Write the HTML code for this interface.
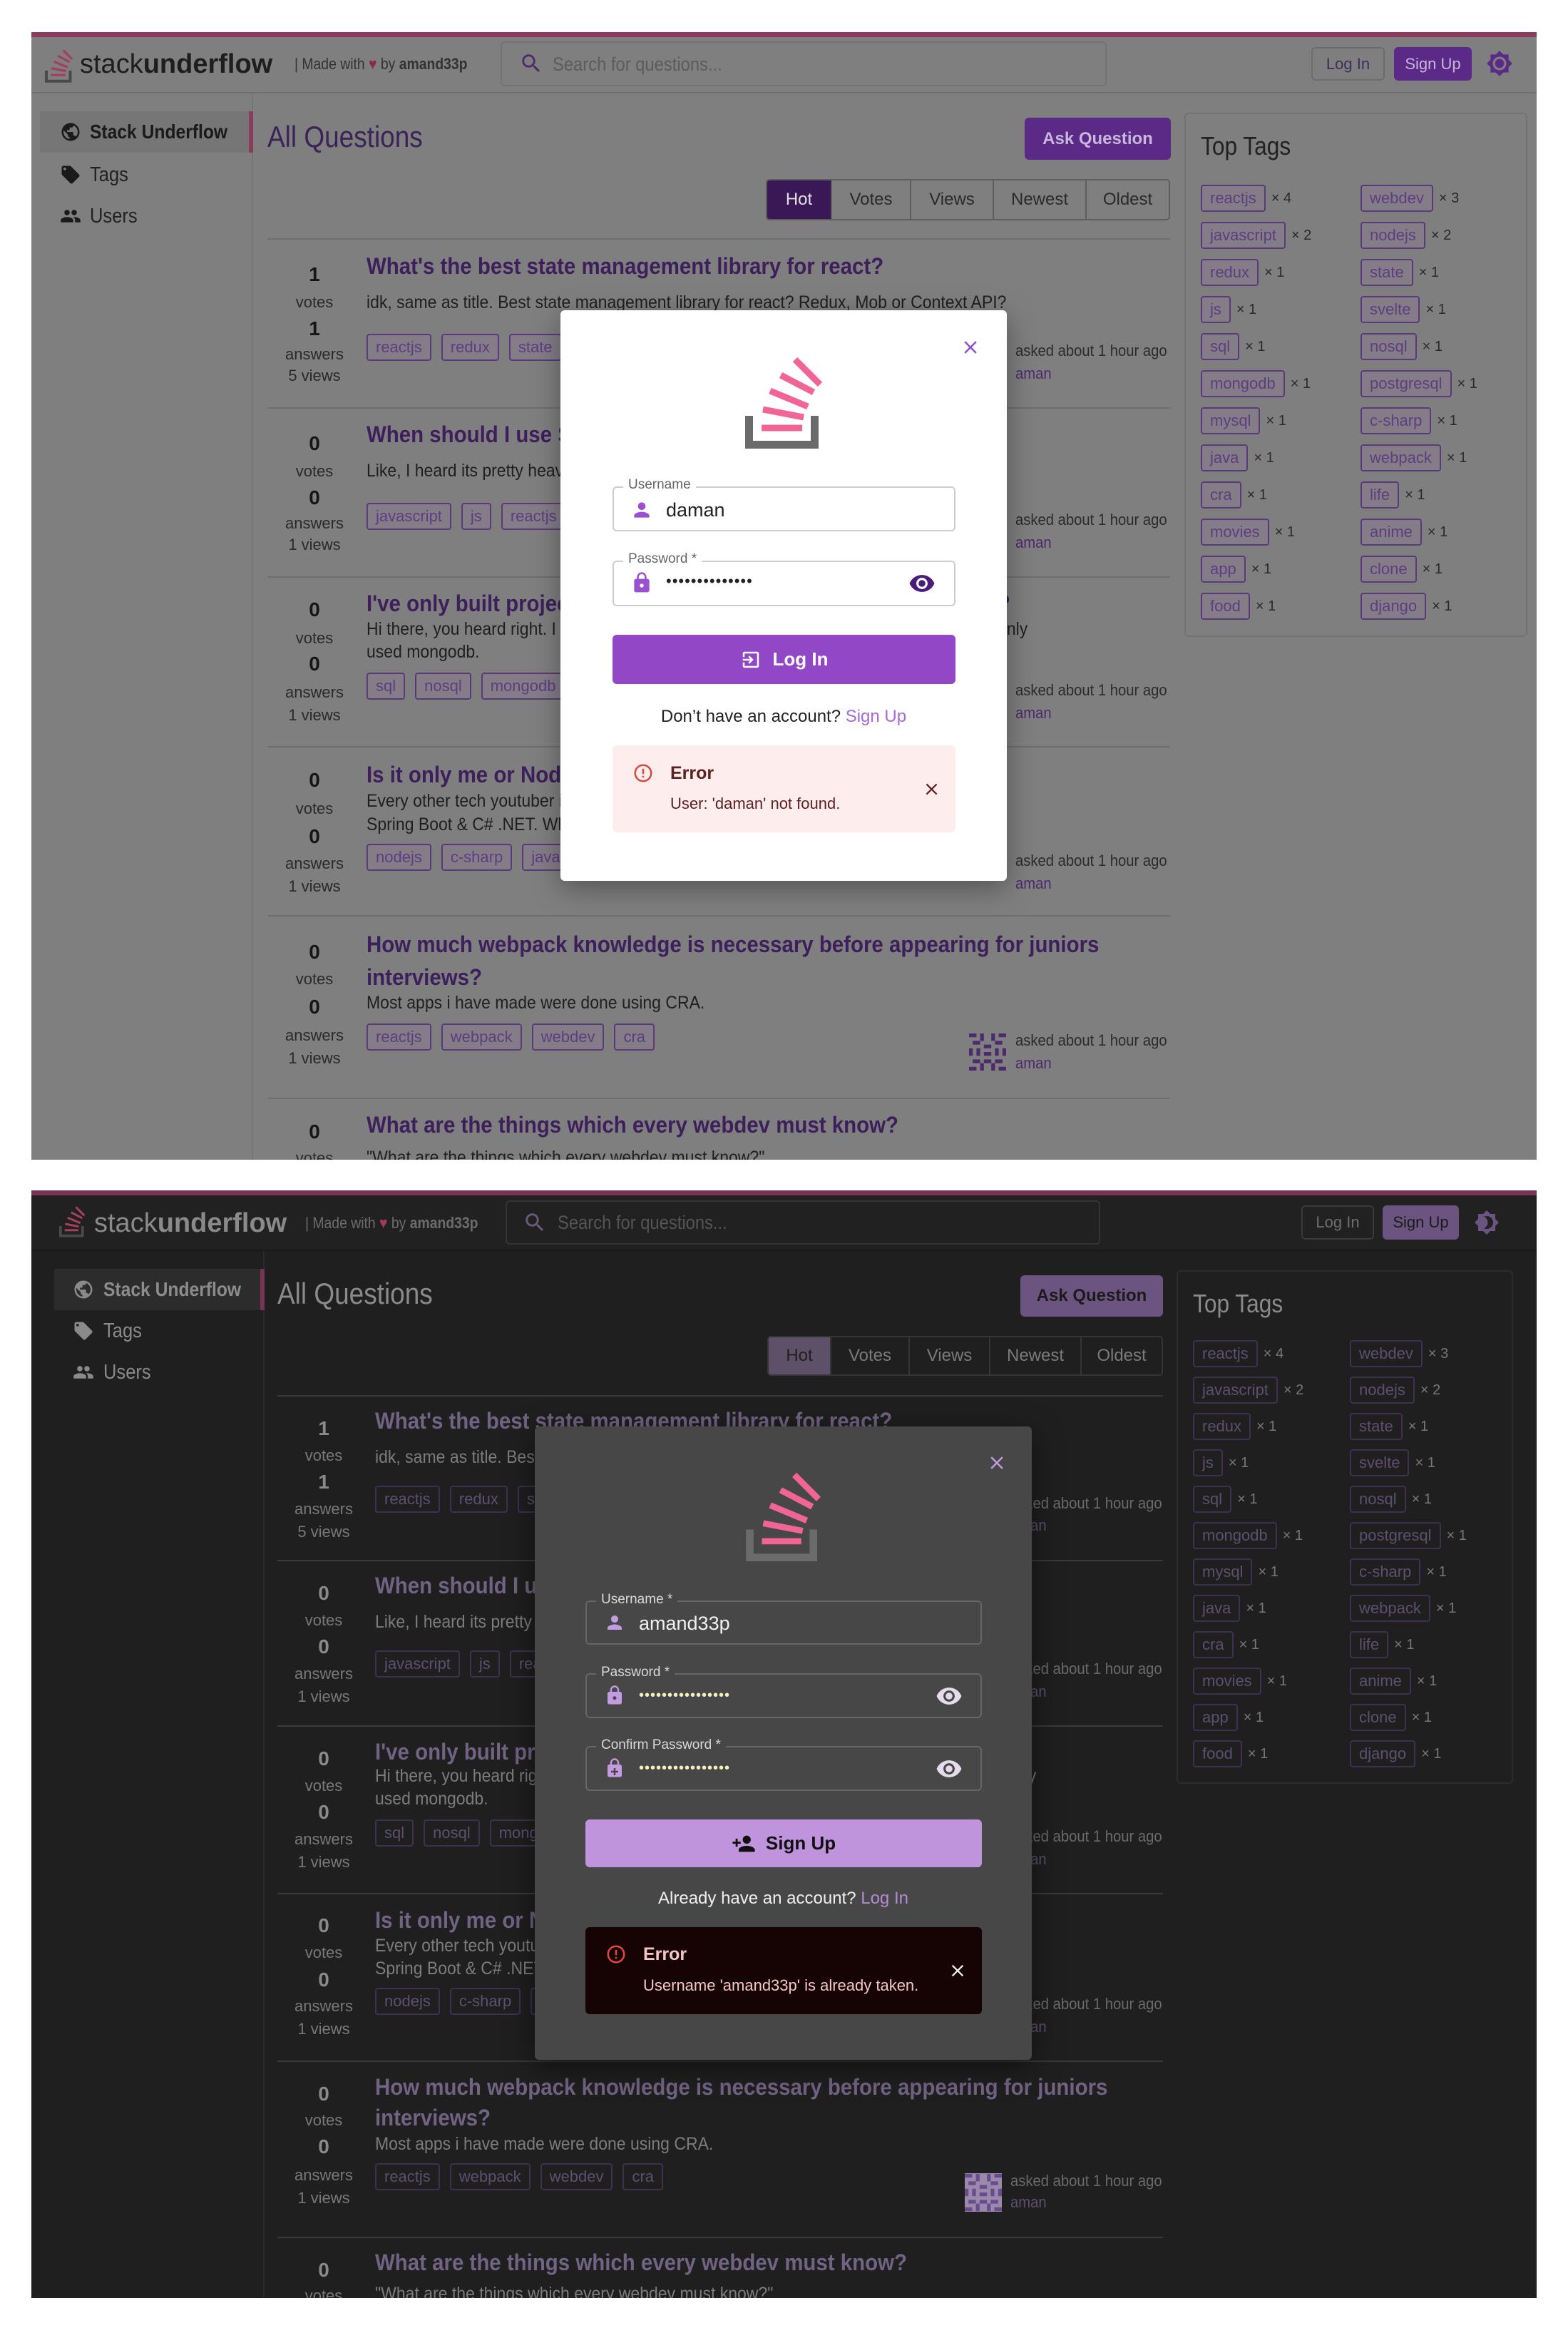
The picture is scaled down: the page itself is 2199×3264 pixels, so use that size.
<!DOCTYPE html>
<html><head><meta charset="utf-8">
<style>
*{box-sizing:border-box;margin:0;padding:0}
body{width:2199px;height:3264px;position:relative;background:#fff;overflow:hidden;font-family:"Liberation Sans Narrow","Liberation Sans",sans-serif}
.a{position:absolute;white-space:nowrap}
.fr{position:absolute;left:0;top:0;width:2199px;height:3264px}
.q{font-size:32px;line-height:40px;font-weight:bold;transform:scaleX(.92);transform-origin:0 50%}
.d{font-size:25px;line-height:32px;transform:scaleX(.92);transform-origin:0 50%}
.cz{transform:scaleX(.88);transform-origin:0 50%}
.n{font-size:28px;line-height:32px;width:100px;text-align:center;font-weight:bold}
.l{font-size:22px;line-height:28px;width:140px;text-align:center}
.tg{display:flex;gap:14px;height:38px}
.tag{border:2px solid;border-radius:4px;padding:0 11px;height:38px;line-height:34px;font-size:22px}
.as{font-size:22px;line-height:28px;transform:scaleX(.92);transform-origin:0 50%}
.ttr{display:flex;align-items:center;gap:8px;font-size:20px}
.btn{display:flex;align-items:center;justify-content:center;border-radius:6px}
.ms{font-family:"Liberation Sans",sans-serif}
svg{display:block}
.F1 .q{color:#3d1f5c}.F1 .d{color:#1f1f1f}.F1 .n{color:#161616}.F1 .l{color:#2a2a2a}
.F1 .tag{border-color:#5b3a7b;color:#5e3d80;background:#847d88}.F1 .as{color:#2b2b2b}.F1 .am{color:#4d2a6e}
.F1 .ttr{color:#2a2a2a}
.F2 .q{color:#706383}.F2 .d{color:#7c7c7c}.F2 .n{color:#8a8a8a}.F2 .l{color:#787878}
.F2 .tag{border-color:#3e3150;color:#5d4f6f}.F2 .as{color:#6a6a6a}.F2 .am{color:#5d4f6f}
.F2 .ttr{color:#777}
</style></head><body>
<svg width="0" height="0" style="position:absolute">
<defs>
<symbol id="lg" viewBox="0 0 110 132"><path d="M5.5 84V124.5H97.5V84" fill="none" stroke="#6b6b6b" stroke-width="11"/><g stroke="#f06595" stroke-width="9"><line x1="23" y1="101" x2="80" y2="101"/><line x1="25" y1="75" x2="82" y2="86"/><line x1="35" y1="49" x2="88" y2="71"/><line x1="50" y1="27" x2="96" y2="51"/><line x1="70" y1="5" x2="105" y2="40"/></g></symbol>
<symbol id="lgd" viewBox="0 0 110 132"><path d="M5.5 84V124.5H97.5V84" fill="none" stroke="#4a4a4a" stroke-width="11"/><g stroke="#a3405f" stroke-width="9"><line x1="23" y1="101" x2="80" y2="101"/><line x1="25" y1="75" x2="82" y2="86"/><line x1="35" y1="49" x2="88" y2="71"/><line x1="50" y1="27" x2="96" y2="51"/><line x1="70" y1="5" x2="105" y2="40"/></g></symbol>
<symbol id="per" viewBox="0 0 24 24"><path d="M12 12c2.21 0 4-1.79 4-4s-1.79-4-4-4-4 1.79-4 4 1.79 4 4 4zm0 2c-2.67 0-8 1.34-8 4v2h16v-2c0-2.66-5.33-4-8-4z"/></symbol>
<symbol id="lock" viewBox="0 0 24 24"><path d="M18 8h-1V6c0-2.76-2.24-5-5-5S7 3.24 7 6v2H6c-1.1 0-2 .9-2 2v10c0 1.1.9 2 2 2h12c1.1 0 2-.9 2-2V10c0-1.1-.9-2-2-2zm-6 9c-1.1 0-2-.9-2-2s.9-2 2-2 2 .9 2 2-.9 2-2 2zm3.1-9H8.9V6c0-1.71 1.39-3.1 3.1-3.1 1.71 0 3.1 1.39 3.1 3.1v2z"/></symbol>
<symbol id="lockp" viewBox="0 0 24 24"><path d="M18 8h-1V6c0-2.76-2.24-5-5-5S7 3.24 7 6v2H6c-1.1 0-2 .9-2 2v10c0 1.1.9 2 2 2h12c1.1 0 2-.9 2-2V10c0-1.1-.9-2-2-2zm-5 12h-2v-3H8v-2h3v-3h2v3h3v2h-3zm2.1-12H8.9V6c0-1.71 1.39-3.1 3.1-3.1 1.710 0 3.1 1.39 3.1 3.1v2z"/></symbol>
<symbol id="eye" viewBox="0 0 24 24"><path d="M12 4.5C7 4.5 2.73 7.61 1 12c1.73 4.39 6 7.5 11 7.5s9.27-3.11 11-7.5c-1.73-4.39-6-7.5-11-7.5zM12 17c-2.76 0-5-2.24-5-5s2.24-5 5-5 5 2.24 5 5-2.24 5-5 5zm0-8c-1.66 0-3 1.34-3 3s1.34 3 3 3 3-1.34 3-3-1.34-3-3-3z"/></symbol>
<symbol id="login" viewBox="0 0 24 24"><path d="M3 5c0-1.1.9-2 2-2h14c1.1 0 2 .9 2 2v14c0 1.1-.9 2-2 2H5c-1.1 0-2-.9-2-2v-4h2v4h14V5H5v4H3V5zm7.5 2.5L9.1 8.9 11.2 11H3v2h8.2l-2.1 2.1 1.4 1.4L15 12l-4.5-4.5z"/></symbol>
<symbol id="padd" viewBox="0 0 24 24"><path d="M15 12c2.21 0 4-1.79 4-4s-1.79-4-4-4-4 1.79-4 4 1.79 4 4 4zm-9-2V7H4v3H1v2h3v3h2v-3h3v-2H6zm9 4c-2.67 0-8 1.34-8 4v2h16v-2c0-2.66-5.33-4-8-4z"/></symbol>
<symbol id="cls" viewBox="0 0 24 24"><path d="M19 6.41L17.59 5 12 10.59 6.41 5 5 6.41 10.59 12 5 17.59 6.41 19 12 13.41 17.59 19 19 17.59 13.41 12z"/></symbol>
<symbol id="err" viewBox="0 0 24 24"><path d="M11 15h2v2h-2zm0-8h2v6h-2zm.99-5C6.47 2 2 6.48 2 12s4.47 10 9.99 10C17.52 22 22 17.52 22 12S17.52 2 11.99 2zM12 20c-4.42 0-8-3.58-8-8s3.58-8 8-8 8 3.58 8 8-3.58 8-8 8z"/></symbol>
<symbol id="srch" viewBox="0 0 24 24"><path d="M15.5 14h-.79l-.28-.27C15.41 12.59 16 11.11 16 9.5 16 5.91 13.09 3 9.5 3S3 5.91 3 9.5 5.91 16 9.5 16c1.61 0 3.09-.59 4.23-1.57l.27.28v.79l5 4.99L20.49 19l-4.99-5zm-6 0C7.01 14 5 11.99 5 9.5S7.01 5 9.5 5 14 7.01 14 9.5 11.99 14 9.5 14z"/></symbol>
<symbol id="glb" viewBox="0 0 24 24"><path d="M12 2C6.48 2 2 6.48 2 12s4.48 10 10 10 10-4.48 10-10S17.52 2 12 2zm-1 17.93c-3.95-.49-7-3.85-7-7.93 0-.62.08-1.21.21-1.79L9 15v1c0 1.1.9 2 2 2v1.930zm6.9-2.54c-.26-.81-1-1.39-1.9-1.39h-1v-3c0-.55-.45-1-1-1H8v-2h2c.55 0 1-.45 1-1V7h2c1.1 0 2-.9 2-2v-.41c2.93 1.19 5 4.06 5 7.41 0 2.08-.8 3.97-2.1 5.39z"/></symbol>
<symbol id="tagi" viewBox="0 0 24 24"><path d="M21.41 11.58l-9-9C12.05 2.22 11.55 2 11 2H4c-1.1 0-2 .9-2 2v7c0 .55.22 1.05.59 1.42l9 9c.36.36.86.58 1.41.58.55 0 1.05-.22 1.41-.59l7-7c.37-.36.59-.86.59-1.41 0-.55-.23-1.06-.59-1.42zM5.5 7C4.67 7 4 6.33 4 5.5S4.67 4 5.5 4 7 4.67 7 5.5 6.33 7 5.5 7z"/></symbol>
<symbol id="ppl" viewBox="0 0 24 24"><path d="M16 11c1.66 0 2.99-1.34 2.99-3S17.66 5 16 5c-1.66 0-3 1.34-3 3s1.34 3 3 3zm-8 0c1.66 0 2.99-1.34 2.99-3S9.66 5 8 5C6.34 5 5 6.34 5 8s1.34 3 3 3zm0 2c-2.33 0-7 1.17-7 3.5V19h14v-2.5c0-2.33-4.67-3.5-7-3.5zm8 0c-.29 0-.62.02-.97.05 1.16.84 1.97 1.97 1.97 3.45V19h6v-2.5c0-2.33-4.67-3.5-7-3.5z"/></symbol>
<symbol id="sun" viewBox="0 0 24 24"><path d="M20 8.69V4h-4.69L12 .69 8.69 4H4v4.69L.69 12 4 15.31V20h4.69L12 23.31 15.31 20H20v-4.69L23.31 12 20 8.69zM12 18c-3.31 0-6-2.69-6-6s2.69-6 6-6 6 2.69 6 6-2.69 6-6 6zm0-10c-2.21 0-4 1.79-4 4s1.79 4 4 4 4-1.79 4-4-1.79-4-4-4z"/></symbol>
<symbol id="moon" viewBox="0 0 24 24"><path d="M20 8.69V4h-4.69L12 .69 8.69 4H4v4.69L.69 12 4 15.31V20h4.69L12 23.31 15.31 20H20v-4.69L23.31 12 20 8.69zM12 18c-.89 0-1.74-.2-2.5-.55C11.56 16.5 13 14.42 13 12s-1.44-4.5-3.5-5.45C10.26 6.2 11.11 6 12 6c3.31 0 6 2.69 6 6s-2.69 6-6 6z"/></symbol>
<symbol id="idn" viewBox="0 0 10 10"><path d="M0 0h2v1H0zM8 0h2v1H8zM3 0h1v2H3zM6 0h1v2H6zM1 2h2v1H1zM7 2h2v1H7zM4 3h2v1H4zM0 4h1v2H0zM9 4h1v2H9zM2 4h1v2H2zM7 4h1v2H7zM4 5h2v1H4zM1 7h2v1H1zM7 7h2v1H7zM3 8h1v2H3zM6 8h1v2H6zM0 9h2v1H0zM8 9h2v1H8zM4 7h2v1H4z"/></symbol>
</defs></svg>

<!-- ============ FRAME 1 ============ -->
<div class="fr F1" style="clip-path:inset(45px 44px 1638px 44px)">
<div class="a" style="left:44px;top:45px;width:2111px;height:1581px;background:#7f7f7f"></div>
<div class="a" style="left:44px;top:45px;width:2111px;height:7px;background:#8b3b5b"></div>
<div class="a" style="left:44px;top:129px;width:2111px;height:2px;background:#6f6f6f"></div>
<svg class="a" style="left:63px;top:67px" width="40" height="51"><use href="#lgd"/></svg>
<div class="a ms" style="left:112px;top:66px;font-size:38px;line-height:48px;color:#1e1e1e">stack<b>underflow</b></div>
<div class="a cz" style="left:413px;top:76px;font-size:22px;line-height:28px;color:#333">| Made with <span style="color:#8a2a4a">♥</span> by <b>amand33p</b></div>
<div class="a" style="left:702px;top:58px;width:850px;height:63px;border:2px solid #737373;border-radius:6px"></div>
<svg class="a" style="left:728px;top:72px;fill:#4d2a6e" width="34" height="34"><use href="#srch"/></svg>
<div class="a cz" style="left:775px;top:74px;font-size:27px;line-height:32px;color:#5c5c5c">Search for questions...</div>
<div class="a btn" style="left:1839px;top:66px;width:103px;height:47px;border:2px solid #6c6c6c;font-size:22px;color:#3e2e5a">Log In</div>
<div class="a btn" style="left:1955px;top:66px;width:109px;height:47px;background:#5a2a86;font-size:22px;color:#c9b6dc">Sign Up</div>
<svg class="a" style="left:2084px;top:70px;fill:#5a2a86" width="38" height="38"><use href="#sun"/></svg>
<div class="a" style="left:353px;top:131px;width:2px;height:1500px;background:#767676"></div>
<div class="a" style="left:56px;top:156px;width:293px;height:58px;background:#767676"></div>
<div class="a" style="left:349px;top:156px;width:6px;height:58px;background:#8b3b5b"></div>
<svg class="a" style="left:84px;top:170px;fill:#1a1a1a" width="30" height="30"><use href="#glb"/></svg>
<div class="a cz" style="left:126px;top:169px;font-size:28px;line-height:32px;font-weight:bold;color:#1a1a1a">Stack Underflow</div>
<svg class="a" style="left:84px;top:230px;fill:#1a1a1a" width="30" height="30"><use href="#tagi"/></svg>
<div class="a cz" style="left:126px;top:229px;font-size:29px;line-height:32px;color:#222">Tags</div>
<svg class="a" style="left:84px;top:288px;fill:#1a1a1a" width="30" height="30"><use href="#ppl"/></svg>
<div class="a cz" style="left:126px;top:287px;font-size:29px;line-height:32px;color:#222">Users</div>
<div class="a cz" style="left:375px;top:168px;font-size:42px;line-height:48px;color:#3a2356">All Questions</div>
<div class="a btn" style="left:1437px;top:165px;width:205px;height:59px;background:#5a2a86;font-size:24px;color:#c9b6dc;font-weight:bold">Ask Question</div>
<div class="a" style="left:1074px;top:251px;width:567px;height:58px;border:2px solid #5e5e5e;border-radius:5px;display:flex;font-size:24px;color:#2a2a2a;overflow:hidden">
<div class="btn" style="width:89px;background:#3a1858;color:#e0e0e0;border-radius:0">Hot</div>
<div class="btn" style="width:111px;border-left:2px solid #5e5e5e;border-radius:0">Votes</div>
<div class="btn" style="width:116px;border-left:2px solid #5e5e5e;border-radius:0">Views</div>
<div class="btn" style="width:130px;border-left:2px solid #5e5e5e;border-radius:0">Newest</div>
<div class="btn" style="flex:1;border-left:2px solid #5e5e5e;border-radius:0">Oldest</div>
</div>
<div class="a" style="left:375px;top:334px;width:1266px;height:2px;background:#6e6e6e"></div>
<div class="a" style="left:375px;top:571px;width:1266px;height:2px;background:#6e6e6e"></div>
<div class="a" style="left:375px;top:808px;width:1266px;height:2px;background:#6e6e6e"></div>
<div class="a" style="left:375px;top:1046px;width:1266px;height:2px;background:#6e6e6e"></div>
<div class="a" style="left:375px;top:1283px;width:1266px;height:2px;background:#6e6e6e"></div>
<div class="a" style="left:375px;top:1539px;width:1266px;height:2px;background:#6e6e6e"></div>
<div class="a n" style="left:391px;top:369px">1</div><div class="a l" style="left:371px;top:410px">votes</div>
<div class="a n" style="left:391px;top:445px">1</div><div class="a l" style="left:371px;top:483px">answers</div><div class="a l" style="left:371px;top:513px">5 views</div>
<div class="a q" style="left:514px;top:353px">What's the best state management library for react?</div>
<div class="a d" style="left:514px;top:408px">idk, same as title. Best state management library for react? Redux, Mob or Context API?</div>
<div class="a tg" style="left:514px;top:468px"><span class="tag">reactjs</span><span class="tag">redux</span><span class="tag">state</span></div>
<svg class="a" style="left:1359px;top:466px;fill:#4d2a6e" width="52" height="52"><use href="#idn"/></svg>
<div class="a as" style="left:1424px;top:478px">asked about 1 hour ago</div><div class="a as am" style="left:1424px;top:510px">aman</div>
<div class="a n" style="left:391px;top:606px">0</div><div class="a l" style="left:371px;top:647px">votes</div>
<div class="a n" style="left:391px;top:682px">0</div><div class="a l" style="left:371px;top:720px">answers</div><div class="a l" style="left:371px;top:750px">1 views</div>
<div class="a q" style="left:514px;top:589px">When should I use Svelte now that it's getting popular?</div>
<div class="a d" style="left:514px;top:644px">Like, I heard its pretty heavy on the client side...</div>
<div class="a tg" style="left:514px;top:705px"><span class="tag">javascript</span><span class="tag">js</span><span class="tag">reactjs</span></div>
<svg class="a" style="left:1359px;top:703px;fill:#4d2a6e" width="52" height="52"><use href="#idn"/></svg>
<div class="a as" style="left:1424px;top:715px">asked about 1 hour ago</div><div class="a as am" style="left:1424px;top:747px">aman</div>
<div class="a n" style="left:391px;top:839px">0</div><div class="a l" style="left:371px;top:881px">votes</div>
<div class="a n" style="left:391px;top:915px">0</div><div class="a l" style="left:371px;top:957px">answers</div><div class="a l" style="left:371px;top:989px">1 views</div>
<div class="a q" style="left:514px;top:826px">I've only built projects using NoSQL DBs. Are SQL DBs worth it?</div>
<div class="a d" style="left:514px;top:866px">Hi there, you heard right. I have only built projects with NoSQL DBs, are they worth it? Only</div>
<div class="a d" style="left:514px;top:898px">used mongodb.</div>
<div class="a tg" style="left:514px;top:943px"><span class="tag">sql</span><span class="tag">nosql</span><span class="tag">mongodb</span></div>
<svg class="a" style="left:1359px;top:942px;fill:#4d2a6e" width="52" height="52"><use href="#idn"/></svg>
<div class="a as" style="left:1424px;top:954px">asked about 1 hour ago</div><div class="a as am" style="left:1424px;top:986px">aman</div>
<div class="a n" style="left:391px;top:1078px">0</div><div class="a l" style="left:371px;top:1120px">votes</div>
<div class="a n" style="left:391px;top:1157px">0</div><div class="a l" style="left:371px;top:1197px">answers</div><div class="a l" style="left:371px;top:1229px">1 views</div>
<div class="a q" style="left:514px;top:1066px">Is it only me or NodeJS is not as popular as people are saying?</div>
<div class="a d" style="left:514px;top:1107px">Every other tech youtuber is hyping NodeJS, but job openings are mainly Java</div>
<div class="a d" style="left:514px;top:1140px">Spring Boot &amp; C# .NET. Why?</div>
<div class="a tg" style="left:514px;top:1183px"><span class="tag">nodejs</span><span class="tag">c-sharp</span><span class="tag">java</span></div>
<svg class="a" style="left:1359px;top:1181px;fill:#4d2a6e" width="52" height="52"><use href="#idn"/></svg>
<div class="a as" style="left:1424px;top:1193px">asked about 1 hour ago</div><div class="a as am" style="left:1424px;top:1225px">aman</div>
<div class="a n" style="left:391px;top:1319px">0</div><div class="a l" style="left:371px;top:1359px">votes</div>
<div class="a n" style="left:391px;top:1396px">0</div><div class="a l" style="left:371px;top:1438px">answers</div><div class="a l" style="left:371px;top:1470px">1 views</div>
<div class="a q" style="left:514px;top:1304px">How much webpack knowledge is necessary before appearing for juniors</div>
<div class="a q" style="left:514px;top:1350px">interviews?</div>
<div class="a d" style="left:514px;top:1390px">Most apps i have made were done using CRA.</div>
<div class="a tg" style="left:514px;top:1435px"><span class="tag">reactjs</span><span class="tag">webpack</span><span class="tag">webdev</span><span class="tag">cra</span></div>
<svg class="a" style="left:1359px;top:1448px;fill:#4d2a6e" width="52" height="54"><use href="#idn"/></svg>
<div class="a as" style="left:1424px;top:1445px">asked about 1 hour ago</div><div class="a as am" style="left:1424px;top:1477px">aman</div>
<div class="a n" style="left:391px;top:1571px">0</div><div class="a l" style="left:371px;top:1610px">votes</div>
<div class="a q" style="left:514px;top:1557px">What are the things which every webdev must know?</div>
<div class="a d" style="left:514px;top:1607px">"What are the things which every webdev must know?"</div>
<div class="a" style="left:1661px;top:158px;width:481px;height:735px;border:2px solid #737373;border-radius:6px"></div>
<div class="a cz" style="left:1684px;top:185px;font-size:36px;line-height:40px;color:#222">Top Tags</div>
<div class="a" style="left:1684px;top:259px;display:flex;flex-direction:column;gap:14px">
<div class="ttr"><span class="tag">reactjs</span>× 4</div><div class="ttr"><span class="tag">javascript</span>× 2</div><div class="ttr"><span class="tag">redux</span>× 1</div><div class="ttr"><span class="tag">js</span>× 1</div><div class="ttr"><span class="tag">sql</span>× 1</div><div class="ttr"><span class="tag">mongodb</span>× 1</div><div class="ttr"><span class="tag">mysql</span>× 1</div><div class="ttr"><span class="tag">java</span>× 1</div><div class="ttr"><span class="tag">cra</span>× 1</div><div class="ttr"><span class="tag">movies</span>× 1</div><div class="ttr"><span class="tag">app</span>× 1</div><div class="ttr"><span class="tag">food</span>× 1</div>
</div>
<div class="a" style="left:1908px;top:259px;display:flex;flex-direction:column;gap:14px">
<div class="ttr"><span class="tag">webdev</span>× 3</div><div class="ttr"><span class="tag">nodejs</span>× 2</div><div class="ttr"><span class="tag">state</span>× 1</div><div class="ttr"><span class="tag">svelte</span>× 1</div><div class="ttr"><span class="tag">nosql</span>× 1</div><div class="ttr"><span class="tag">postgresql</span>× 1</div><div class="ttr"><span class="tag">c-sharp</span>× 1</div><div class="ttr"><span class="tag">webpack</span>× 1</div><div class="ttr"><span class="tag">life</span>× 1</div><div class="ttr"><span class="tag">anime</span>× 1</div><div class="ttr"><span class="tag">clone</span>× 1</div><div class="ttr"><span class="tag">django</span>× 1</div>
</div>
<div class="a" style="left:786px;top:435px;width:626px;height:800px;background:#fff;border-radius:6px;box-shadow:0 10px 40px rgba(0,0,0,.35)"></div>
<svg class="a" style="left:1346px;top:472px;fill:#8f4fc8" width="30" height="30"><use href="#cls"/></svg>
<svg class="a" style="left:1045px;top:499px" width="110" height="132"><use href="#lg"/></svg>
<div class="a" style="left:859px;top:682px;width:481px;height:63px;border:2px solid #cdcdcd;border-radius:6px"></div>
<div class="a ms" style="left:874px;top:668px;padding:0 7px;background:#fff;font-size:19px;line-height:24px;color:#666">Username</div>
<svg class="a" style="left:884px;top:699px;fill:#9a50d0" width="32" height="32"><use href="#per"/></svg>
<div class="a ms" style="left:934px;top:698px;font-size:27px;line-height:34px;color:#222">daman</div>
<div class="a" style="left:859px;top:786px;width:481px;height:64px;border:2px solid #cdcdcd;border-radius:6px"></div>
<div class="a ms" style="left:874px;top:772px;padding:0 7px;background:#fff;font-size:19px;line-height:24px;color:#666">Password *</div>
<svg class="a" style="left:884px;top:801px;fill:#9a50d0" width="32" height="32"><use href="#lock"/></svg>
<div class="a ms" style="left:934px;top:800px;font-size:22px;line-height:30px;color:#222;letter-spacing:1px">••••••••••••••</div>
<svg class="a" style="left:1274px;top:799px;fill:#4b1d7a" width="38" height="38"><use href="#eye"/></svg>
<div class="a btn ms" style="left:859px;top:890px;width:481px;height:69px;background:#9147c6;color:#fff;font-size:26px;font-weight:bold;gap:16px"><svg width="30" height="30" style="fill:#fff"><use href="#login"/></svg>Log In</div>
<div class="a ms" style="left:786px;width:626px;text-align:center;top:990px;font-size:24px;line-height:30px;color:#222">Don’t have an account? <span style="color:#a66ad8">Sign Up</span></div>
<div class="a" style="left:859px;top:1045px;width:481px;height:122px;background:#fdeded;border-radius:6px"></div>
<svg class="a" style="left:887px;top:1069px;fill:#d84a3f" width="30" height="30"><use href="#err"/></svg>
<div class="a ms" style="left:940px;top:1069px;font-size:25px;line-height:30px;font-weight:bold;color:#5f2120">Error</div>
<div class="a ms" style="left:940px;top:1113px;font-size:22px;line-height:28px;color:#5f2120">User: 'daman' not found.</div>
<svg class="a" style="left:1293px;top:1093px;fill:#5f2120" width="27" height="27"><use href="#cls"/></svg>
</div>

<!-- ============ FRAME 2 ============ -->
<div class="fr F2" style="clip-path:inset(1669px 44px 42px 44px)">
<div class="a" style="left:44px;top:1669px;width:2111px;height:1553px;background:#1f1f1f"></div>
<div class="a" style="left:44px;top:1669px;width:2111px;height:7px;background:#7a3453"></div>
<div class="a" style="left:44px;top:1676px;width:2111px;height:77px;background:#212121"></div>
<div class="a" style="left:44px;top:1752px;width:2111px;height:2px;background:#181818"></div>
<svg class="a" style="left:83px;top:1690px" width="37" height="46"><use href="#lgd"/></svg>
<div class="a ms" style="left:132px;top:1691px;font-size:38px;line-height:48px;color:#8a8a8a">stack<b>underflow</b></div>
<div class="a cz" style="left:428px;top:1701px;font-size:22px;line-height:28px;color:#6c6c6c">| Made with <span style="color:#a33a5a">♥</span> by <b>amand33p</b></div>
<div class="a" style="left:709px;top:1683px;width:834px;height:62px;border:2px solid #343434;border-radius:6px"></div>
<svg class="a" style="left:733px;top:1697px;fill:#6b5a80" width="34" height="34"><use href="#srch"/></svg>
<div class="a cz" style="left:782px;top:1698px;font-size:27px;line-height:32px;color:#555">Search for questions...</div>
<div class="a btn" style="left:1825px;top:1690px;width:102px;height:48px;border:2px solid #3a3a3a;font-size:22px;color:#6e6e6e">Log In</div>
<div class="a btn" style="left:1939px;top:1690px;width:107px;height:48px;background:#6b5580;font-size:22px;color:#1a1a1a">Sign Up</div>
<svg class="a" style="left:2067px;top:1696px;fill:#6b5580" width="36" height="36"><use href="#moon"/></svg>
<div class="a" style="left:369px;top:1754px;width:2px;height:1470px;background:#2a2a2a"></div>
<div class="a" style="left:76px;top:1779px;width:289px;height:58px;background:#2c2c2c"></div>
<div class="a" style="left:365px;top:1779px;width:6px;height:58px;background:#7a3453"></div>
<svg class="a" style="left:102px;top:1793px;fill:#8a8a8a" width="30" height="30"><use href="#glb"/></svg>
<div class="a cz" style="left:145px;top:1792px;font-size:28px;line-height:32px;font-weight:bold;color:#8c8c8c">Stack Underflow</div>
<svg class="a" style="left:102px;top:1851px;fill:#8a8a8a" width="30" height="30"><use href="#tagi"/></svg>
<div class="a cz" style="left:145px;top:1850px;font-size:29px;line-height:32px;color:#8a8a8a">Tags</div>
<svg class="a" style="left:102px;top:1909px;fill:#8a8a8a" width="30" height="30"><use href="#ppl"/></svg>
<div class="a cz" style="left:145px;top:1908px;font-size:29px;line-height:32px;color:#8a8a8a">Users</div>
<div class="a cz" style="left:389px;top:1790px;font-size:42px;line-height:48px;color:#8a8a8a">All Questions</div>
<div class="a btn" style="left:1431px;top:1788px;width:200px;height:58px;background:#6b5580;font-size:24px;color:#1b1b1b;font-weight:bold">Ask Question</div>
<div class="a" style="left:1076px;top:1873px;width:555px;height:56px;border:2px solid #353535;border-radius:5px;display:flex;font-size:24px;color:#7a7a7a;overflow:hidden">
<div class="btn" style="width:86px;background:#5e5068;color:#1f1f1f;border-radius:0">Hot</div>
<div class="btn" style="width:110px;border-left:2px solid #353535;border-radius:0">Votes</div>
<div class="btn" style="width:113px;border-left:2px solid #353535;border-radius:0">Views</div>
<div class="btn" style="width:128px;border-left:2px solid #353535;border-radius:0">Newest</div>
<div class="btn" style="flex:1;border-left:2px solid #353535;border-radius:0">Oldest</div>
</div>
<div class="a" style="left:389px;top:1956px;width:1242px;height:2px;background:#3a3a3a"></div>
<div class="a" style="left:389px;top:2187px;width:1242px;height:2px;background:#3a3a3a"></div>
<div class="a" style="left:389px;top:2419px;width:1242px;height:2px;background:#3a3a3a"></div>
<div class="a" style="left:389px;top:2654px;width:1242px;height:2px;background:#3a3a3a"></div>
<div class="a" style="left:389px;top:2889px;width:1242px;height:2px;background:#3a3a3a"></div>
<div class="a" style="left:389px;top:3136px;width:1242px;height:2px;background:#3a3a3a"></div>
<div class="a n" style="left:404px;top:1987px">1</div><div class="a l" style="left:384px;top:2027px">votes</div>
<div class="a n" style="left:404px;top:2062px">1</div><div class="a l" style="left:384px;top:2102px">answers</div><div class="a l" style="left:384px;top:2134px">5 views</div>
<div class="a q" style="left:526px;top:1972px">What's the best state management library for react?</div>
<div class="a d" style="left:526px;top:2027px">idk, same as title. Best state management library for react? Redux, Mob or Context API?</div>
<div class="a tg" style="left:526px;top:2083px"><span class="tag">reactjs</span><span class="tag">redux</span><span class="tag">state</span></div>
<svg class="a" style="left:1353px;top:2084px;fill:#6a4a90" width="52" height="52"><use href="#idn"/></svg>
<div class="a as" style="left:1417px;top:2094px">asked about 1 hour ago</div><div class="a as am" style="left:1417px;top:2125px">aman</div>
<div class="a n" style="left:404px;top:2218px">0</div><div class="a l" style="left:384px;top:2258px">votes</div>
<div class="a n" style="left:404px;top:2293px">0</div><div class="a l" style="left:384px;top:2333px">answers</div><div class="a l" style="left:384px;top:2365px">1 views</div>
<div class="a q" style="left:526px;top:2203px">When should I use Svelte now that it's getting popular?</div>
<div class="a d" style="left:526px;top:2258px">Like, I heard its pretty heavy on the client side...</div>
<div class="a tg" style="left:526px;top:2314px"><span class="tag">javascript</span><span class="tag">js</span><span class="tag">reactjs</span></div>
<svg class="a" style="left:1353px;top:2316px;fill:#6a4a90" width="52" height="52"><use href="#idn"/></svg>
<div class="a as" style="left:1417px;top:2326px">asked about 1 hour ago</div><div class="a as am" style="left:1417px;top:2358px">aman</div>
<div class="a n" style="left:404px;top:2450px">0</div><div class="a l" style="left:384px;top:2490px">votes</div>
<div class="a n" style="left:404px;top:2525px">0</div><div class="a l" style="left:384px;top:2565px">answers</div><div class="a l" style="left:384px;top:2597px">1 views</div>
<div class="a q" style="left:526px;top:2436px">I've only built projects using NoSQL DBs. Are SQL DBs worth it?</div>
<div class="a d" style="left:526px;top:2474px">Hi there, you heard right. I have only built projects with NoSQL DBs, are they worth it? Only</div>
<div class="a d" style="left:526px;top:2506px">used mongodb.</div>
<div class="a tg" style="left:526px;top:2551px"><span class="tag">sql</span><span class="tag">nosql</span><span class="tag">mongodb</span></div>
<svg class="a" style="left:1353px;top:2551px;fill:#6a4a90" width="52" height="52"><use href="#idn"/></svg>
<div class="a as" style="left:1417px;top:2561px">asked about 1 hour ago</div><div class="a as am" style="left:1417px;top:2593px">aman</div>
<div class="a n" style="left:404px;top:2684px">0</div><div class="a l" style="left:384px;top:2724px">votes</div>
<div class="a n" style="left:404px;top:2760px">0</div><div class="a l" style="left:384px;top:2799px">answers</div><div class="a l" style="left:384px;top:2831px">1 views</div>
<div class="a q" style="left:526px;top:2672px">Is it only me or NodeJS is not as popular as people are saying?</div>
<div class="a d" style="left:526px;top:2712px">Every other tech youtuber is hyping NodeJS, but job openings are mainly Java</div>
<div class="a d" style="left:526px;top:2744px">Spring Boot &amp; C# .NET. Why?</div>
<div class="a tg" style="left:526px;top:2787px"><span class="tag">nodejs</span><span class="tag">c-sharp</span><span class="tag">java</span></div>
<svg class="a" style="left:1353px;top:2786px;fill:#6a4a90" width="52" height="52"><use href="#idn"/></svg>
<div class="a as" style="left:1417px;top:2796px">asked about 1 hour ago</div><div class="a as am" style="left:1417px;top:2828px">aman</div>
<div class="a n" style="left:404px;top:2920px">0</div><div class="a l" style="left:384px;top:2959px">votes</div>
<div class="a n" style="left:404px;top:2994px">0</div><div class="a l" style="left:384px;top:3036px">answers</div><div class="a l" style="left:384px;top:3068px">1 views</div>
<div class="a q" style="left:526px;top:2906px">How much webpack knowledge is necessary before appearing for juniors</div>
<div class="a q" style="left:526px;top:2949px">interviews?</div>
<div class="a d" style="left:526px;top:2990px">Most apps i have made were done using CRA.</div>
<div class="a tg" style="left:526px;top:3033px"><span class="tag">reactjs</span><span class="tag">webpack</span><span class="tag">webdev</span><span class="tag">cra</span></div>
<svg class="a" style="left:1353px;top:3047px;fill:#6a4a90;background:#9a8aaa" width="52" height="54"><use href="#idn"/></svg>
<div class="a as" style="left:1417px;top:3044px">asked about 1 hour ago</div><div class="a as am" style="left:1417px;top:3074px">aman</div>
<div class="a n" style="left:404px;top:3167px">0</div><div class="a l" style="left:384px;top:3205px">votes</div>
<div class="a q" style="left:526px;top:3152px">What are the things which every webdev must know?</div>
<div class="a d" style="left:526px;top:3200px">"What are the things which every webdev must know?"</div>
<div class="a" style="left:1650px;top:1781px;width:472px;height:720px;border:2px solid #2c2c2c;border-radius:6px"></div>
<div class="a cz" style="left:1673px;top:1808px;font-size:36px;line-height:40px;color:#8a8a8a">Top Tags</div>
<div class="a" style="left:1673px;top:1879px;display:flex;flex-direction:column;gap:13px">
<div class="ttr"><span class="tag">reactjs</span>× 4</div><div class="ttr"><span class="tag">javascript</span>× 2</div><div class="ttr"><span class="tag">redux</span>× 1</div><div class="ttr"><span class="tag">js</span>× 1</div><div class="ttr"><span class="tag">sql</span>× 1</div><div class="ttr"><span class="tag">mongodb</span>× 1</div><div class="ttr"><span class="tag">mysql</span>× 1</div><div class="ttr"><span class="tag">java</span>× 1</div><div class="ttr"><span class="tag">cra</span>× 1</div><div class="ttr"><span class="tag">movies</span>× 1</div><div class="ttr"><span class="tag">app</span>× 1</div><div class="ttr"><span class="tag">food</span>× 1</div>
</div>
<div class="a" style="left:1893px;top:1879px;display:flex;flex-direction:column;gap:13px">
<div class="ttr"><span class="tag">webdev</span>× 3</div><div class="ttr"><span class="tag">nodejs</span>× 2</div><div class="ttr"><span class="tag">state</span>× 1</div><div class="ttr"><span class="tag">svelte</span>× 1</div><div class="ttr"><span class="tag">nosql</span>× 1</div><div class="ttr"><span class="tag">postgresql</span>× 1</div><div class="ttr"><span class="tag">c-sharp</span>× 1</div><div class="ttr"><span class="tag">webpack</span>× 1</div><div class="ttr"><span class="tag">life</span>× 1</div><div class="ttr"><span class="tag">anime</span>× 1</div><div class="ttr"><span class="tag">clone</span>× 1</div><div class="ttr"><span class="tag">django</span>× 1</div>
</div>
<div class="a" style="left:750px;top:2000px;width:697px;height:888px;background:#474747;border-radius:6px;box-shadow:0 10px 40px rgba(0,0,0,.5)"></div>
<svg class="a" style="left:1383px;top:2036px;fill:#c39be0" width="30" height="30"><use href="#cls"/></svg>
<svg class="a" style="left:1046px;top:2063px" width="107" height="128"><use href="#lg"/></svg>
<div class="a" style="left:821px;top:2244px;width:556px;height:62px;border:2px solid #666;border-radius:6px"></div>
<div class="a ms" style="left:836px;top:2231px;padding:0 7px;background:#474747;font-size:19px;line-height:24px;color:#d8d8d8">Username *</div>
<svg class="a" style="left:847px;top:2260px;fill:#c39be0" width="30" height="30"><use href="#per"/></svg>
<div class="a ms" style="left:896px;top:2259px;font-size:27px;line-height:34px;color:#f0f0f0">amand33p</div>
<div class="a" style="left:821px;top:2346px;width:556px;height:63px;border:2px solid #666;border-radius:6px"></div>
<div class="a ms" style="left:836px;top:2333px;padding:0 7px;background:#474747;font-size:19px;line-height:24px;color:#d8d8d8">Password *</div>
<svg class="a" style="left:847px;top:2362px;fill:#c39be0" width="30" height="30"><use href="#lock"/></svg>
<div class="a ms" style="left:896px;top:2362px;font-size:20px;line-height:30px;color:#f4f0c0;letter-spacing:1px">••••••••••••••••</div>
<svg class="a" style="left:1312px;top:2359px;fill:#e4dcea" width="38" height="38"><use href="#eye"/></svg>
<div class="a" style="left:821px;top:2448px;width:556px;height:63px;border:2px solid #666;border-radius:6px"></div>
<div class="a ms" style="left:836px;top:2435px;padding:0 7px;background:#474747;font-size:19px;line-height:24px;color:#d8d8d8">Confirm Password *</div>
<svg class="a" style="left:847px;top:2464px;fill:#c39be0" width="30" height="30"><use href="#lockp"/></svg>
<div class="a ms" style="left:896px;top:2464px;font-size:20px;line-height:30px;color:#f4f0c0;letter-spacing:1px">••••••••••••••••</div>
<svg class="a" style="left:1312px;top:2461px;fill:#e4dcea" width="38" height="38"><use href="#eye"/></svg>
<div class="a btn ms" style="left:821px;top:2551px;width:556px;height:67px;background:#bf94dc;color:#111;font-size:26px;font-weight:bold;gap:14px"><svg width="34" height="34" style="fill:#111"><use href="#padd"/></svg>Sign Up</div>
<div class="a ms" style="left:750px;width:697px;text-align:center;top:2647px;font-size:24px;line-height:30px;color:#eee">Already have an account? <span style="color:#b48ad6">Log In</span></div>
<div class="a" style="left:821px;top:2702px;width:556px;height:122px;background:#160303;border-radius:6px"></div>
<svg class="a" style="left:849px;top:2725px;fill:#e5463b" width="30" height="30"><use href="#err"/></svg>
<div class="a ms" style="left:902px;top:2725px;font-size:25px;line-height:30px;font-weight:bold;color:#f4c7c7">Error</div>
<div class="a ms" style="left:902px;top:2770px;font-size:22px;line-height:28px;color:#f4c7c7">Username 'amand33p' is already taken.</div>
<svg class="a" style="left:1329px;top:2749px;fill:#eee" width="28" height="28"><use href="#cls"/></svg>
</div>
</body></html>
